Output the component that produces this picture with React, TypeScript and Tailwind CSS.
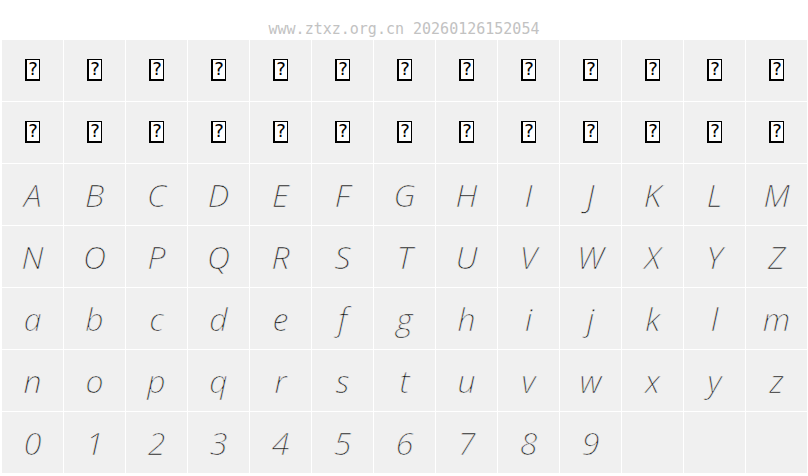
const upper = 'ABCDEFGHIJKLMNOPQRSTUVWXYZ'.split('')
const lower = 'abcdefghijklmnopqrstuvwxyz'.split('')
const digits = '0123456789'.split('')

function Tofu() {
  return (
    <div className="box-border w-[15px] h-[22px] mt-[-2px] border border-black border-l-2 border-b-2 bg-white flex items-center justify-center text-[18px] leading-none text-black font-['DejaVu_Sans',sans-serif]">
      ?
    </div>
  )
}

export default function App() {
  const cells: (string | null)[] = [
    ...Array(26).fill(null),
    ...upper,
    ...lower,
    ...digits,
    '',
    '',
    '',
  ]

  return (
    <div className="w-[808px] h-[476px] bg-white overflow-hidden">
      {/* Header */}
      <div className="h-[40px] flex items-start justify-center pt-[22px]">
        <span className="text-[15px] leading-none text-[#c2c2c2] font-['DejaVu_Sans_Mono',monospace]">
          www.ztxz.org.cn 20260126152054
        </span>
      </div>

      {/* Glyph grid */}
      <div className="pl-[2px] grid grid-cols-[repeat(13,61px)] auto-rows-[61px] gap-[1px]">
        {cells.map((c, i) => (
          <div key={i} className="bg-[#f0f0f0] flex items-center justify-center">
            {c === null ? (
              <Tofu />
            ) : (
              <span className="text-[32px] leading-none font-light italic text-[#111] [-webkit-text-stroke:0.55px_#f0f0f0] font-['Open_Sans',sans-serif]">
                {c}
              </span>
            )}
          </div>
        ))}
      </div>
    </div>
  )
}
